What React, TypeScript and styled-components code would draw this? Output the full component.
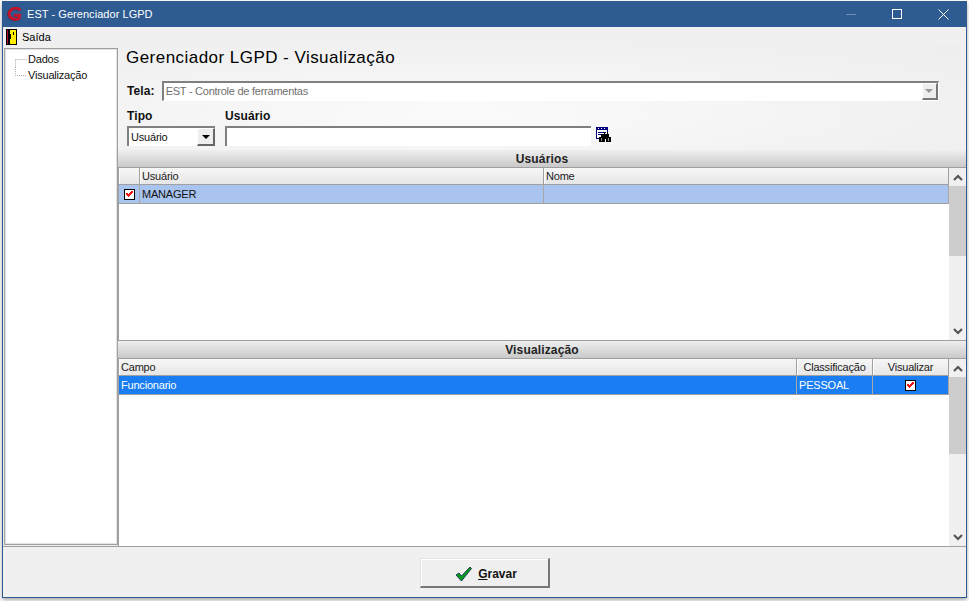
import React from "react";
import styled, { createGlobalStyle } from "styled-components";

const Global = createGlobalStyle`
  html, body { margin: 0; padding: 0; background: #fff; overflow: hidden; }
  * { box-sizing: border-box; }
  #root { width: 969px; height: 601px; font-family: "Liberation Sans", Arial, sans-serif; }
`;

const Screen = styled.div`
  width: 969px; height: 601px; padding: 1px 2px 3px 2px;
  background: #fff;
`;
const Win = styled.div`
  width: 965px; height: 597px; display: flex; flex-direction: column;
  background: #f0f0f0; border: 1px solid #2f5b92; border-top: 0;
  box-shadow: 0 2px 4px rgba(0,0,0,.35);
`;
const TitleBar = styled.div`
  height: 26px; flex: none; display: flex; align-items: center; background: #2e5b92; color: #fff;
  font-size: 11px; padding-left: 3px;
`;
const TitleText = styled.span`margin-left: 4px; letter-spacing: .05px;`;
const WinButtons = styled.div`margin-left: auto; display: flex; height: 26px;`;
const WinBtn = styled.div`
  width: 46px; height: 26px; display: flex; align-items: center; justify-content: center;
`;
const MenuBar = styled.div`
  height: 19px; flex: none; display: flex; align-items: center; font-size: 11px; color: #000; padding-left: 3px; gap: 5px;
`;
const Body = styled.div`flex: 1; min-height: 0; display: flex; background: #f0f0f0;`;
const Tree = styled.div`
  width: 114px; flex: none; margin: 2px 0 1px 1px; background: #fff;
  border: 1px solid #a0a0a0; box-shadow: inset 0 0 0 1px #e3e3e3;
  padding: 2px 0 0 9px; font-size: 11px; letter-spacing: -.2px;
`;
const TreeRow = styled.div`
  height: 16px; display: flex; align-items: center; color: #111;
`;
const TreeLines = styled.svg`width: 14px; height: 16px; flex: none;`;
const Main = styled.div`flex: 1; min-width: 0; display: flex; flex-direction: column;`;
const Heading = styled.h1`
  margin: 0; font-weight: 400; font-size: 17px; letter-spacing: .46px; line-height: 20px; color: #000;
  padding: 1px 0 0 8px; height: 22px;
`;
const Top = styled.div`height: 104px; flex: none; padding-top: 1px;
  background: radial-gradient(ellipse at 40% 65%, #fbfbfb 0%, #f2f2f2 60%, #eeeeee 100%);
`;
const TelaRow = styled.div`display: flex; align-items: center; padding: 8px 0 0 9px; height: 35px;`;
const BoldLabel = styled.label`font-weight: 700; font-size: 12px; letter-spacing: .1px; color: #111;`;
const TelaField = styled.div`
  width: 777px; height: 20px; margin-left: 7px; background: #fff; border: 1px solid #fff;
  border-top: 2px solid #808080; border-left: 2px solid #808080; display: flex; align-items: center;
  font-size: 11px; letter-spacing: -.25px; color: #6f6f6f; padding-left: 2px; position: relative;
`;
const TelaArrow = styled.div`
  position: absolute; right: 0; top: 0; width: 16px; height: 17px; background: #eee;
  border-right: 2px solid #777; border-bottom: 2px solid #777; border-left: 1px solid #fff; border-top: 1px solid #fff;
  display: flex; align-items: center; justify-content: center;
`;
const Tri = styled.div<{ $c: string }>`
  width: 0; height: 0; border-left: 4px solid transparent; border-right: 4px solid transparent; border-top: 4px solid ${p => p.$c};
`;
const FilterRow = styled.div`display: flex; padding: 5px 0 0 9px; gap: 10px;`;
const FilterCol = styled.div`display: flex; flex-direction: column; gap: 3px;`;
const Select = styled.div`
  width: 88px; height: 20px; background: #fff; border-top: 2px solid #808080; border-left: 2px solid #808080;
  display: flex; align-items: center; font-size: 11px; letter-spacing: -.2px; color: #111; padding-left: 2px; position: relative;
`;
const SelArrow = styled.div`
  position: absolute; right: 0; top: 0; width: 18px; height: 18px; background: #eee;
  border-right: 2px solid #666; border-bottom: 2px solid #666; border-top: 1px solid #fff; border-left: 1px solid #fff;
  display: flex; align-items: center; justify-content: center;
`;
const UserRow = styled.div`display: flex; align-items: flex-start; gap: 5px;`;
const UserInput = styled.div`
  width: 366px; height: 20px; background: #fff; border-top: 2px solid #808080; border-left: 2px solid #808080;
`;
const Band = styled.div<{ $t?: boolean }>`
  height: ${p => (p.$t ? 19 : 18)}px; flex: none; display: flex; align-items: center; justify-content: center;
  font-size: 12px; font-weight: 700; color: #222; letter-spacing: .15px;
  background: linear-gradient(#efefef, #c9c9c9); border-bottom: 1px solid #9e9e9e;
  border-top: ${p => (p.$t ? "1px solid #a0a0a0" : "0")};
`;
const GridWrap = styled.div<{ $h: number }>`
  height: ${p => p.$h}px; flex: none; display: flex; background: #fff;
`;
const GridInner = styled.div`flex: 1; min-width: 0; display: flex; flex-direction: column; border-left: 1px solid #a0a0a0;`;
const Head = styled.div`display: flex; height: 17px; background: linear-gradient(#f7f7f7, #e6e6e6); border-bottom: 1px solid #a0a0a0;`;
const HCell = styled.div<{ $w?: number; $c?: boolean }>`
  ${p => (p.$w ? `width:${p.$w}px; flex:none;` : "flex:1;")}
  border-right: 1px solid #a0a0a0; font-size: 11px; letter-spacing: -.2px; color: #222; line-height: 16px; padding-left: 2px;
  ${p => (p.$c ? "text-align:center;padding-left:0;" : "")}
  box-shadow: inset 1px 0 0 #fff;
`;
const DataRow = styled.div<{ $bg: string; $fg: string }>`
  display: flex; height: 19px; background: ${p => p.$bg}; color: ${p => p.$fg};
  border-bottom: 1px solid #a0a0a0; font-size: 11px; letter-spacing: -.2px;
`;
const DCell = styled.div<{ $w?: number; $c?: boolean }>`
  ${p => (p.$w ? `width:${p.$w}px; flex:none;` : "flex:1;")}
  display: flex; align-items: center; ${p => (p.$c ? "justify-content:center;" : "padding-left:2px;")}
  border-right: 1px solid #a8a8a8;
`;
const Blank = styled.div`flex: 1;`;
const Scroll = styled.div`
  width: 17px; flex: none; background: #f0f0f0; display: flex; flex-direction: column;
`;
const ScrollBtn = styled.div`height: 18px; flex: none; display: flex; align-items: center; justify-content: center;`;
const Thumb = styled.div<{ $h: number }>`height: ${p => p.$h}px; flex: none; background: #cdcdcd;`;
const Fill = styled.div`flex: 1;`;
const Footer = styled.div`
  height: 51px; flex: none; display: flex; justify-content: center; padding-top: 11px;
  border-top: 1px solid #a0a0a0;
`;
const SaveBtn = styled.button`
  width: 130px; height: 30px; padding: 2px 0 0 4px; background: #efefef; font: 700 12px "Liberation Sans", Arial, sans-serif; letter-spacing: 0; color: #111;
  display: flex; align-items: center; justify-content: center; gap: 6px;
  border: 0; border-top: 1px solid #e4e4e4; border-left: 1px solid #e4e4e4; border-right: 2px solid #777; border-bottom: 2px solid #777;
  box-shadow: inset 1px 1px 0 #fff;
`;
const Under = styled.span`text-decoration: underline;`;

const Check = () => (
  <svg width="11" height="11" viewBox="0 0 11 11" shapeRendering="crispEdges">
    <rect x="0" y="0" width="11" height="11" fill="#000" />
    <rect x="1" y="1" width="9" height="9" fill="#fff" />
    <path d="M2 4h2v1h1v-1h1v-1h1v-1h2v2h-1v1h-1v1h-1v1h-1v1h-1v-1h-1v-1h-1z" fill="#ee1111" />
  </svg>
);
const Chevron = ({ up }: { up?: boolean }) => (
  <svg width="10" height="7" viewBox="0 0 10 7">
    <path d={up ? "M1 6l4-4 4 4" : "M1 1l4 4 4-4"} fill="none" stroke="#555" strokeWidth="2.200" />
  </svg>
);
const Logo = () => (
  <svg width="17" height="15" viewBox="0 0 17 15">
    <path d="M14.500 3.200A6.500 5.500 0 1 0 13 11.500L13.500 8.200H8" fill="none" stroke="#2d3a58" strokeWidth="3" transform="translate(-.6 .5)" />
    <path d="M14.500 3.200A6.500 5.500 0 1 0 13 11.500L13.500 8.200H8" fill="none" stroke="#c4142e" strokeWidth="3" />
  </svg>
);
const Door = () => (
  <svg width="11" height="16" viewBox="0 0 11 16" shapeRendering="crispEdges">
    <rect x="0" y="0" width="11" height="16" fill="#000" />
    <rect x="1" y="1" width="1" height="14" fill="#b01030" />
    <rect x="2" y="1" width="1" height="14" fill="#000" />
    <rect x="4" y="1" width="6" height="14" fill="#ffee00" />
    <rect x="3" y="5" width="2" height="5" fill="#000" />
    <rect x="7" y="3" width="1" height="3" fill="#000" />
  </svg>
);
const Binoc = () => (
  <svg width="15" height="15" viewBox="0 0 15 15" shapeRendering="crispEdges" style={{ marginTop: 1 }}>
    <rect x="0" y="0" width="12" height="12" fill="#000080" />
    <rect x="1" y="3" width="10" height="8" fill="#fff" />
    <path d="M2 1h1v1H2zM5 1h1v1H5zM8 1h1v1H8z" fill="#fff" />
    <path d="M2 5h8v1H2zM2 7h3v1H2z" fill="#000080" />
    <path d="M5 7h3v-2h1v2h2v-2h1v2h1v3h2v5h-5v-3h-1v3H3v-5h2z" fill="#000" />
    <path d="M5 11h1v3H5zM12 11h1v3h-1z" fill="#8a8a8a" />
  </svg>
);
const Lines = ({ last }: { last?: boolean }) => (
  <TreeLines viewBox="0 0 14 16">
    <path d={last ? "M1.500 0v8.500H13" : "M1.500 8.500v8M1.500 8.500H13"} fill="none" stroke="#aaa" strokeDasharray="1 1" />
  </TreeLines>
);

export default function App() {
  return (
    <Screen>
      <Global />
      <Win>
        <TitleBar>
          <Logo />
          <TitleText>EST - Gerenciador LGPD</TitleText>
          <WinButtons>
            <WinBtn>
              <svg width="10" height="10" viewBox="0 0 10 10"><path d="M0 5.500h10" stroke="#6f8db3" /></svg>
            </WinBtn>
            <WinBtn>
              <svg width="10" height="10" viewBox="0 0 10 10"><rect x=".5" y=".5" width="9" height="9" fill="none" stroke="#fff" /></svg>
            </WinBtn>
            <WinBtn>
              <svg width="11" height="11" viewBox="0 0 11 11"><path d="M.5.500l10 10M10.500.500l-10 10" stroke="#fff" /></svg>
            </WinBtn>
          </WinButtons>
        </TitleBar>
        <MenuBar><Door />Saída</MenuBar>
        <Body>
          <Tree>
            <TreeRow><Lines />Dados</TreeRow>
            <TreeRow><Lines last />Visualização</TreeRow>
          </Tree>
          <Main>
            <Top>
              <Heading>Gerenciador LGPD - Visualização</Heading>
              <TelaRow>
                <BoldLabel>Tela:</BoldLabel>
                <TelaField>
                  EST - Controle de ferramentas
                  <TelaArrow><Tri $c="#999" /></TelaArrow>
                </TelaField>
              </TelaRow>
              <FilterRow>
                <FilterCol>
                  <BoldLabel>Tipo</BoldLabel>
                  <Select>Usuário<SelArrow><Tri $c="#000" /></SelArrow></Select>
                </FilterCol>
                <FilterCol>
                  <BoldLabel>Usuário</BoldLabel>
                  <UserRow><UserInput /><Binoc /></UserRow>
                </FilterCol>
              </FilterRow>
            </Top>
            <Band>Usuários</Band>
            <GridWrap $h={172}>
              <GridInner>
                <Head>
                  <HCell $w={21} />
                  <HCell $w={404}>Usuário</HCell>
                  <HCell>Nome</HCell>
                </Head>
                <DataRow $bg="#a9c4ee" $fg="#111">
                  <DCell $w={21} $c><Check /></DCell>
                  <DCell $w={404}>MANAGER</DCell>
                  <DCell />
                </DataRow>
                <Blank />
              </GridInner>
              <Scroll>
                <ScrollBtn><Chevron up /></ScrollBtn>
                <Thumb $h={70} />
                <Fill />
                <ScrollBtn><Chevron /></ScrollBtn>
              </Scroll>
            </GridWrap>
            <Band $t>Visualização</Band>
            <GridWrap $h={187}>
              <GridInner>
                <Head>
                  <HCell $w={678}>Campo</HCell>
                  <HCell $w={76} $c>Classificação</HCell>
                  <HCell $c>Visualizar</HCell>
                </Head>
                <DataRow $bg="#1a7ef2" $fg="#fff">
                  <DCell $w={678}>Funcionario</DCell>
                  <DCell $w={76}>PESSOAL</DCell>
                  <DCell $c><Check /></DCell>
                </DataRow>
                <Blank />
              </GridInner>
              <Scroll>
                <ScrollBtn><Chevron up /></ScrollBtn>
                <Thumb $h={77} />
                <Fill />
                <ScrollBtn><Chevron /></ScrollBtn>
              </Scroll>
            </GridWrap>
          </Main>
        </Body>
        <Footer>
          <SaveBtn>
            <svg width="17" height="16" viewBox="0 0 17 16">
              <path d="M1 9l3-2 2.500 3L15 1l1.500 1.500L6.500 15z" fill="#0a9a1e" stroke="#04204a" strokeWidth=".8" />
            </svg>
            <span><Under>G</Under>ravar</span>
          </SaveBtn>
        </Footer>
      </Win>
    </Screen>
  );
}
